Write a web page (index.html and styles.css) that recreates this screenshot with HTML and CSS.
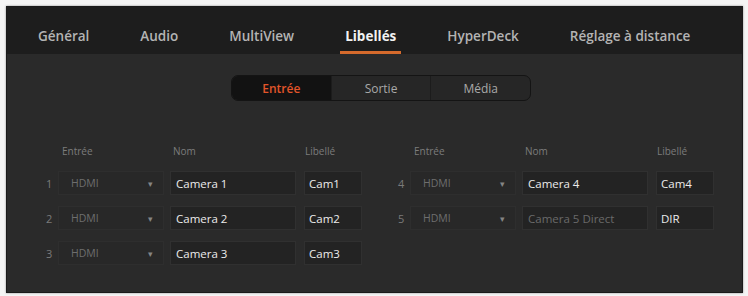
FILE: index.html
```html
<!DOCTYPE html>
<html lang="fr">
<head>
    <meta charset="UTF-8">
    <title>Libellés</title>
    <link rel="stylesheet" href="styles.css">
</head>
<body>
    <div class="panel">
        <div class="tabs">
            <span class="tab">Général</span>
            <span class="tab">Audio</span>
            <span class="tab">MultiView</span>
            <span class="tab active">Libellés</span>
            <span class="tab">HyperDeck</span>
            <span class="tab">Réglage à distance</span>
        </div>

        <div class="content">
            <div class="segmented">
                <span class="seg selected">Entrée</span>
                <span class="seg">Sortie</span>
                <span class="seg">Média</span>
            </div>

            <div class="table">
                <div class="group">
                    <span></span>
                    <span class="head">Entrée</span>
                    <span class="head">Nom</span>
                    <span class="head">Libellé</span>

                    <span class="num">1</span>
                    <div class="select"><span>HDMI</span><span class="arrow">▾</span></div>
                    <div class="field">Camera 1</div>
                    <div class="field short">Cam1</div>

                    <span class="num">2</span>
                    <div class="select"><span>HDMI</span><span class="arrow">▾</span></div>
                    <div class="field">Camera 2</div>
                    <div class="field short">Cam2</div>

                    <span class="num">3</span>
                    <div class="select"><span>HDMI</span><span class="arrow">▾</span></div>
                    <div class="field">Camera 3</div>
                    <div class="field short">Cam3</div>
                </div>

                <div class="group">
                    <span></span>
                    <span class="head">Entrée</span>
                    <span class="head">Nom</span>
                    <span class="head">Libellé</span>

                    <span class="num">4</span>
                    <div class="select"><span>HDMI</span><span class="arrow">▾</span></div>
                    <div class="field">Camera 4</div>
                    <div class="field short">Cam4</div>

                    <span class="num">5</span>
                    <div class="select"><span>HDMI</span><span class="arrow">▾</span></div>
                    <div class="field dim">Camera 5 Direct</div>
                    <div class="field short">DIR</div>
                </div>
            </div>
        </div>
    </div>
</body>
</html>
```

FILE: styles.css
```css
* {
    margin: 0;
    padding: 0;
    box-sizing: border-box;
}

body {
    background: #f4f4f4;
    font-family: "Open Sans", "Liberation Sans", sans-serif;
    padding: 6px 5px 3px 6px;
}

.panel {
    background: #2a2a2a;
    border: 1px solid #1a1a1a;
    height: 287px;
    box-shadow: 0 0 2px rgba(0, 0, 0, 0.4);
}

.tabs {
    background: #1d1d1d;
    height: 47px;
    display: flex;
    align-items: stretch;
    gap: 51px;
    padding-left: 31px;
}

.tab {
    display: flex;
    align-items: center;
    padding-top: 13px;
    font-size: 13.5px;
    font-weight: 600;
    color: #b4b4b4;
    border-bottom: 3px solid transparent;
}

.tab.active {
    color: #f2f2f2;
    font-weight: 700;
    border-bottom-color: #d56a2c;
    padding: 13px 5px 0;
    margin: 0 -5px;
}

.content {
    padding-top: 21px;
}

.segmented {
    width: 300px;
    height: 26px;
    margin-left: 224px;
    display: flex;
    background: #262626;
    border: 1px solid #141414;
    border-radius: 7px;
    overflow: hidden;
}

.seg {
    flex: 1;
    display: flex;
    align-items: center;
    justify-content: center;
    font-size: 12px;
    color: #a9a9a9;
    border-left: 1px solid #1c1c1c;
}

.seg:first-child {
    border-left: none;
}

.seg.selected {
    background: #121212;
    color: #e2552a;
    font-weight: 600;
}

.table {
    display: flex;
    gap: 30px;
    padding-left: 33px;
    margin-top: 38px;
}

.group {
    display: grid;
    grid-template-columns: 18px 106px 132px 66px;
    grid-template-rows: 21px;
    grid-auto-rows: 24px;
    row-gap: 11px;
}

.head {
    font-size: 10px;
    color: #7c7c7c;
    padding-left: 4px;
    align-self: end;
    margin-bottom: 2px;
}

.group .head:nth-child(3) {
    padding-left: 9px;
}

.group .head:nth-child(4) {
    padding-left: 9px;
}

.num {
    display: flex;
    align-items: center;
    padding-left: 6px;
    font-size: 11px;
    color: #7a7a7a;
}

.select {
    display: flex;
    align-items: center;
    justify-content: space-between;
    padding: 0 10px 0 12px;
    background: #282828;
    border: 1px solid #2e2e2e;
    font-size: 10.5px;
    color: #6e6e6e;
}

.arrow {
    font-size: 9px;
    color: #858585;
}

.field {
    display: flex;
    align-items: center;
    margin-left: 6px;
    padding-left: 5px;
    background: #232323;
    border: 1px solid #303030;
    font-size: 11.5px;
    color: #ececec;
}

.field.short {
    margin-left: 8px;
    padding-left: 4px;
}

.field.dim {
    color: #6a6a6a;
}
```
